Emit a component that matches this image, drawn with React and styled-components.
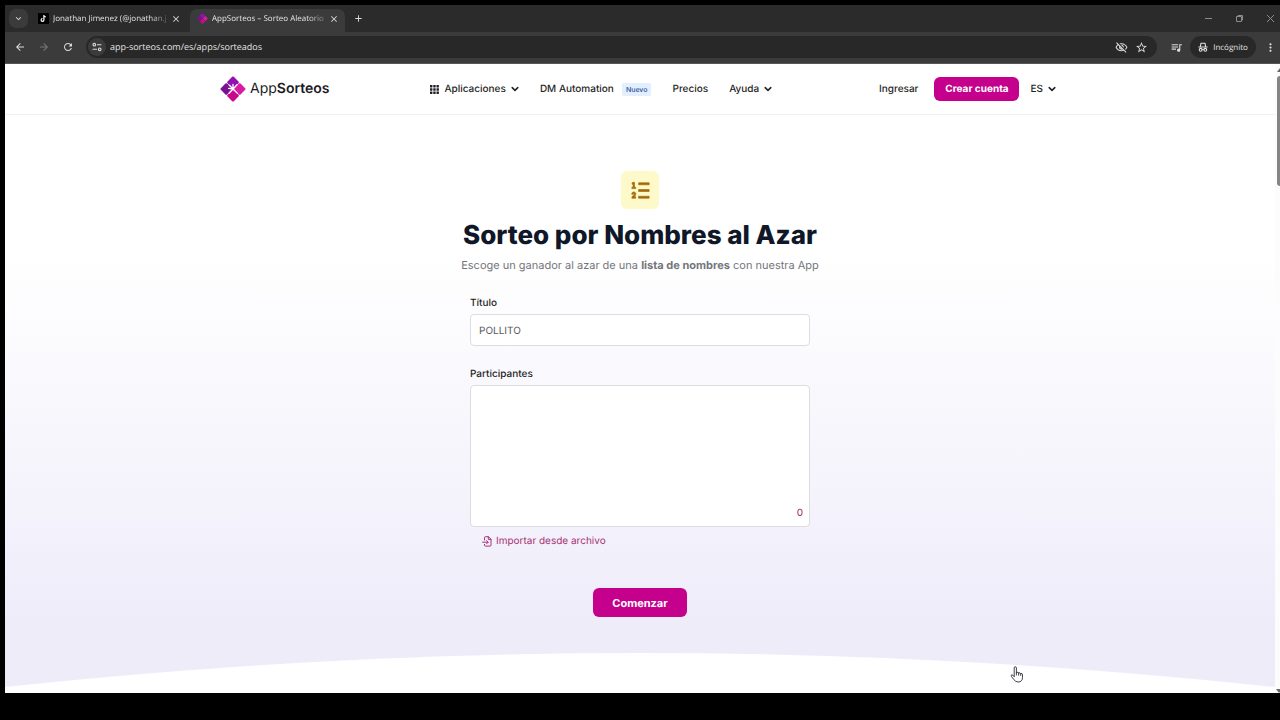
import React from "react";
import styled, { createGlobalStyle } from "styled-components";
import {
  MdAdd,
  MdArrowBack,
  MdArrowForward,
  MdClose,
  MdKeyboardArrowDown,
  MdMoreVert,
  MdOutlineVisibilityOff,
  MdQueueMusic,
  MdRefresh,
  MdStarBorder,
} from "react-icons/md";
import { RiListOrdered2 } from "react-icons/ri";

const GlobalStyle = createGlobalStyle`
  *, *::before, *::after { box-sizing: border-box; }
  body { margin: 0; background: #000; font-family: Inter, "Liberation Sans", sans-serif; text-rendering: geometricPrecision; }
  button, input, textarea { font-family: inherit; margin: 0; text-rendering: inherit; }
`;

const Screen = styled.div`
  position: relative;
  min-height: 100vh;
  padding: 5px 0 27px 5px;
  display: flex;
  flex-direction: column;
  background: #000;
`;

const Chrome = styled.header`
  font-family: "Open Sans", "Noto Sans", sans-serif;
  color: #e3e3e3;
  background: #3b3b3b;
`;

const TabStrip = styled.div`
  display: flex;
  align-items: center;
  gap: 3px;
  height: 27px;
  padding-left: 4px;
  background: #2b2b2b;
`;

const IconButton = styled.button`
  display: flex;
  align-items: center;
  justify-content: center;
  flex: none;
  width: ${(p) => p.$size || 20}px;
  height: ${(p) => p.$size || 20}px;
  padding: 0;
  border: 0;
  border-radius: ${(p) => p.$radius || 10}px;
  background: ${(p) => p.$bg || "transparent"};
  color: ${(p) => p.$color || "#dcdcdc"};
`;

const Tab = styled.div`
  display: flex;
  align-items: center;
  gap: 4px;
  width: ${(p) => p.$width}px;
  height: 23px;
  align-self: flex-end;
  padding: 0 5px 4px 7px;
  border-radius: 7px 7px 0 0;
  background: ${(p) => (p.$active ? "#3b3b3b" : "transparent")};
`;

const TabTitle = styled.span`
  flex: 1;
  min-width: 0;
  white-space: nowrap;
  font-size: 8px;
  line-height: 12px;
  color: #e3e3e3;
  mask-image: linear-gradient(to right, #000 85%, rgba(0, 0, 0, 0.3));
`;

const WindowControls = styled.div`
  display: flex;
  align-items: center;
  gap: 20px;
  margin-left: auto;
  padding-right: 4px;
`;

const Toolbar = styled.div`
  display: flex;
  align-items: center;
  gap: 4px;
  height: 32px;
  padding: 0 0 1px 5px;
  border-bottom: 1px solid #565656;
`;

const AddressBar = styled.div`
  display: flex;
  align-items: center;
  flex: 1;
  height: 22px;
  margin: 0 5px 0 4px;
  padding: 0 6px 0 2px;
  border-radius: 11px;
  background: #282828;
`;

const AddressInput = styled.input`
  flex: 1;
  min-width: 0;
  padding: 0 4px;
  border: 0;
  outline: 0;
  background: transparent;
  color: #e3e3e3;
  font-size: 9px;
  line-height: 14px;
`;

const IncognitoPill = styled.button`
  display: flex;
  align-items: center;
  justify-content: center;
  gap: 5px;
  width: 66px;
  height: 22px;
  padding: 0;
  border: 0;
  border-radius: 11px;
  background: #282828;
  color: #e3e3e3;
  font-size: 8px;
  font-weight: 500;
`;

const Viewport = styled.div`
  display: flex;
  flex: 1;
  background: #fff;
`;

const Page = styled.div`
  flex: 1;
  min-width: 0;
  display: flex;
  flex-direction: column;
`;

const ScrollTrack = styled.div`
  flex: none;
  width: 5px;
  padding-left: 1px;
  overflow: hidden;
  display: flex;
  flex-direction: column;
  justify-content: space-between;
  background: #fcfcfc;
`;

const ScrollTop = styled.div`
  padding: 4px 0 0 1px;
  svg { display: block; margin-bottom: 4px; }
`;

const ScrollThumb = styled.div`
  height: 110px;
  border-radius: 3px 0 0 3px;
  background: #858585;
`;

const Navbar = styled.div`
  height: 51px;
  padding: 0 16px;
  border-bottom: 1px solid #f0f0f2;
`;

const NavInner = styled.div`
  display: flex;
  align-items: center;
  justify-content: space-between;
  max-width: 840px;
  height: 100%;
  margin: 0 auto;
  padding-right: 4px;
`;

const Brand = styled.a`
  display: flex;
  align-items: center;
  gap: 4px;
  color: #1b1b1f;
  font-size: 14px;
  line-height: 20px;
  text-decoration: none;
  b { font-weight: 600; }
`;

const NavGroup = styled.nav`
  display: flex;
  align-items: center;
  gap: ${(p) => p.$gap}px;
  padding-right: ${(p) => p.$end || 0}px;
`;

const NavLink = styled.a`
  display: flex;
  align-items: center;
  gap: ${(p) => p.$gap || 5}px;
  color: #1f1f24;
  font-size: 10px;
  font-weight: 500;
  line-height: 16px;
  text-decoration: none;
`;

const Badge = styled.span`
  padding: 0 4px;
  border-radius: 2px;
  background: #e1effe;
  color: #2b4d9c;
  font-size: 7px;
  line-height: 13px;
`;

const PrimaryButton = styled.button`
  height: ${(p) => p.$height}px;
  width: ${(p) => p.$width}px;
  padding: 0;
  border: 0;
  border-radius: 6px;
  background: #c5008d;
  color: #fff;
  font-size: ${(p) => p.$size}px;
  font-weight: 700;
  line-height: 16px;
`;

const Hero = styled.main`
  flex: 1;
  display: flex;
  flex-direction: column;
  align-items: center;
  padding-top: 56px;
  background: linear-gradient(to bottom, #fff 24%, #f7f6fc 55%, #efecfa 88%);
`;

const IconTile = styled.div`
  display: flex;
  align-items: center;
  justify-content: center;
  width: 38px;
  height: 38px;
  border-radius: 6px;
  background: #fef9c8;
  color: #a16b0c;
  svg { stroke: currentColor; stroke-width: 0.7; }
`;

const Title = styled.h1`
  margin: 8px 0 1px;
  color: #0f1729;
  font-size: 26px;
  font-weight: 800;
  line-height: 38px;
`;

const Subtitle = styled.p`
  margin: 0 0 21px;
  color: #74757c;
  font-size: 11px;
  line-height: 18px;
  b { font-weight: 700; }
`;

const Form = styled.form`
  display: flex;
  flex-direction: column;
  align-items: center;
  width: 100%;
  max-width: 340px;
`;

const Field = styled.div`
  display: flex;
  flex-direction: column;
  gap: 3px;
  width: 100%;
  margin-bottom: ${(p) => p.$space}px;
`;

const Label = styled.label`
  color: #1f1f24;
  font-size: 10px;
  font-weight: 500;
  line-height: 16px;
`;

const TextInput = styled.input`
  width: 100%;
  height: 32px;
  padding: 1px 8px 0;
  border: 1px solid #dcdce2;
  border-radius: 4px;
  outline: 0;
  background: #fff;
  color: #5a5a60;
  font-size: 10px;
`;

const AreaWrap = styled.div`
  position: relative;
`;

const TextArea = styled.textarea`
  display: block;
  width: 100%;
  height: 142px;
  padding: 8px;
  border: 1px solid #dcdce2;
  border-radius: 4px;
  outline: 0;
  resize: none;
  background: #fff;
  font-size: 10px;
`;

const Counter = styled.span`
  position: absolute;
  right: 7px;
  bottom: 6px;
  color: #9b1c5c;
  font-size: 10px;
  line-height: 16px;
`;

const ImportLink = styled.button`
  display: flex;
  align-items: center;
  align-self: flex-start;
  gap: 4px;
  margin: 0 0 39px 12px;
  padding: 0;
  border: 0;
  background: transparent;
  color: #a83275;
  font-size: 10px;
  font-weight: 400;
  line-height: 16px;
`;

const Curve = styled.svg`
  display: block;
  width: 100%;
  height: 40px;
  margin-top: auto;
`;

const Cursor = styled.svg`
  position: absolute;
  left: 1010px;
  top: 666px;
`;

const Chevron = () => (
  <svg width="8" height="8" viewBox="0 0 8 8" fill="none" stroke="currentColor" strokeWidth="1.5" strokeLinecap="round" strokeLinejoin="round" aria-hidden="true">
    <path d="M1.2 2.6 4 5.4 6.8 2.6" />
  </svg>
);

const BrandMark = ({ size, spark }) => (
  <svg width={size} height={size} viewBox="0 0 26 26" aria-hidden="true">
    <g transform="rotate(45 13 13)">
      <rect x="3.800" y="3.800" width="8.900" height="8.900" rx="1.200" fill="#9410b0" />
      <rect x="13.300" y="3.800" width="8.900" height="8.900" rx="1.200" fill="#d81ba4" />
      <rect x="3.800" y="13.300" width="8.900" height="8.900" rx="1.200" fill="#7a1190" />
      <rect x="13.300" y="13.300" width="8.900" height="8.900" rx="1.200" fill="#c9098c" />
    </g>
    {spark && (
      <path d="M13 13V8.400M13 13 8.600 12.400M13 13l-4 4.200M13 13l4-4.200M13 13 9.400 9.200M13 13l4.400 4.400" stroke="#fff" strokeWidth="1.300" strokeLinecap="round" />
    )}
  </svg>
);

const TikTokMark = () => (
  <svg width="11" height="11" viewBox="0 0 11 11" aria-hidden="true">
    <rect width="11" height="11" rx="1" fill="#000" />
    <path d="M5.900 2v4.900a1.400 1.400 0 1 1-1.400-1.400M5.900 2c.1 1.200.9 1.900 2 2" fill="none" stroke="#fff" strokeWidth="1.200" />
  </svg>
);

const TuneIcon = () => (
  <svg width="10" height="10" viewBox="0 0 10 10" fill="none" stroke="currentColor" strokeWidth="1.100" strokeLinecap="round" aria-hidden="true">
    <circle cx="2.300" cy="2.700" r="1.300" />
    <path d="M5.400 2.700H9M1 7.300h3.600" />
    <circle cx="7.700" cy="7.300" r="1.300" />
  </svg>
);

const IncognitoIcon = () => (
  <svg width="10" height="10" viewBox="0 0 10 10" fill="none" stroke="currentColor" strokeWidth="1.100" strokeLinejoin="round" aria-hidden="true">
    <path d="M2.400 4.500 3 1.200h4l.6 3.300M.4 5h9.200M4 7.600q1-.6 2 0" />
    <circle cx="2.700" cy="7.800" r="1.400" />
    <circle cx="7.300" cy="7.800" r="1.400" />
  </svg>
);

const GridIcon = () => (
  <svg width="9" height="9" viewBox="0 0 10 10" fill="currentColor" aria-hidden="true">
    {[0, 3.6, 7.2].map((y) => [0, 3.6, 7.2].map((x) => <rect key={`${x}-${y}`} x={x} y={y} width="2.700" height="2.700" rx=".4" />))}
  </svg>
);

const FileImportIcon = () => (
  <svg width="10" height="11" viewBox="0 0 10 11" fill="none" stroke="currentColor" strokeWidth="1" strokeLinecap="round" strokeLinejoin="round" aria-hidden="true">
    <path d="M2.500 4V1.600q0-.9.900-.9H6.500L9 3.200v6q0 .9-.9.900H3.400q-.9 0-.9-.9V8.400M6.300.8v2.600h2.600M.6 6.200h5.400M4.600 4.600l1.600 1.600-1.600 1.600" />
  </svg>
);

const MinimizeIcon = () => (
  <svg width="9" height="9" viewBox="0 0 9 9" stroke="currentColor" aria-hidden="true"><path d="M1 4.500h7" /></svg>
);

const RestoreIcon = () => (
  <svg width="9" height="9" viewBox="0 0 9 9" fill="none" stroke="currentColor" aria-hidden="true">
    <path d="M1.500 2.500h5v5h-5zM3 2.500V1.500h4.500V6H6.500" />
  </svg>
);

const CloseIcon = () => (
  <svg width="9" height="9" viewBox="0 0 9 9" stroke="currentColor" aria-hidden="true"><path d="m1 1 7 7M8 1 1 8" /></svg>
);

const ScrollArrow = ({ down }) => (
  <svg width="6" height="4" viewBox="0 0 6 4" fill="#666" aria-hidden="true">
    <path d={down ? "M0 0h6L3 4z" : "M3 0l3 4H0z"} />
  </svg>
);

export default function App() {
  return (
    <>
      <GlobalStyle />
      <Screen>
        <Chrome>
          <TabStrip>
            <IconButton $size={19} $radius={7} $bg="#3b3b3b" aria-label="Buscar pestañas"><MdKeyboardArrowDown size={11} /></IconButton>
            <Tab $width={156}>
              <TikTokMark />
              <TabTitle>Jonathan Jimenez (@jonathan.j</TabTitle>
              <IconButton $size={12} aria-label="Cerrar pestaña"><MdClose size={10} /></IconButton>
            </Tab>
            <Tab $width={155} $active>
              <BrandMark size={11} />
              <TabTitle>AppSorteos – Sorteo Aleatorio</TabTitle>
              <IconButton $size={12} aria-label="Cerrar pestaña"><MdClose size={10} /></IconButton>
            </Tab>
            <IconButton aria-label="Nueva pestaña"><MdAdd size={11} /></IconButton>
            <WindowControls>
              <IconButton $size={11} $color="#8c8c8c" aria-label="Minimizar"><MinimizeIcon /></IconButton>
              <IconButton $size={11} $color="#8c8c8c" aria-label="Restaurar"><RestoreIcon /></IconButton>
              <IconButton $size={11} $color="#8c8c8c" aria-label="Cerrar"><CloseIcon /></IconButton>
            </WindowControls>
          </TabStrip>
          <Toolbar>
            <IconButton aria-label="Atrás"><MdArrowBack size={12} /></IconButton>
            <IconButton $color="#777" aria-label="Adelante"><MdArrowForward size={12} /></IconButton>
            <IconButton aria-label="Recargar"><MdRefresh size={12} /></IconButton>
            <AddressBar>
              <IconButton $size={18} $bg="#3b3b3b" aria-label="Información del sitio"><TuneIcon /></IconButton>
              <AddressInput aria-label="Dirección" defaultValue="app-sorteos.com/es/apps/sorteados" />
              <IconButton aria-label="Cookies bloqueadas"><MdOutlineVisibilityOff size={13} /></IconButton>
              <IconButton aria-label="Añadir a favoritos"><MdStarBorder size={13} /></IconButton>
            </AddressBar>
            <IconButton aria-label="Multimedia"><MdQueueMusic size={13} /></IconButton>
            <IncognitoPill><IncognitoIcon />Incógnito</IncognitoPill>
            <IconButton aria-label="Menú"><MdMoreVert size={13} /></IconButton>
          </Toolbar>
        </Chrome>
        <Viewport>
          <Page>
            <Navbar>
              <NavInner>
                <Brand href="#inicio">
                  <BrandMark size={26} spark />
                  <span>App<b>Sorteos</b></span>
                </Brand>
                <NavGroup $gap={21} $end={6}>
                  <NavLink href="#aplicaciones"><GridIcon />Aplicaciones<Chevron /></NavLink>
                  <NavLink href="#dm" $gap={8}>DM Automation<Badge>Nuevo</Badge></NavLink>
                  <NavLink href="#precios">Precios</NavLink>
                  <NavLink href="#ayuda">Ayuda<Chevron /></NavLink>
                </NavGroup>
                <NavGroup $gap={16}>
                  <NavLink href="#ingresar">Ingresar</NavLink>
                  <NavGroup as="div" $gap={11}>
                    <PrimaryButton $size={10} $width={85} $height={24}>Crear cuenta</PrimaryButton>
                    <NavLink href="#idioma">ES<Chevron /></NavLink>
                  </NavGroup>
                </NavGroup>
              </NavInner>
            </Navbar>
            <Hero>
              <IconTile><RiListOrdered2 size={23} /></IconTile>
              <Title>Sorteo por Nombres al Azar</Title>
              <Subtitle>Escoge un ganador al azar de una <b>lista de nombres</b> con nuestra App</Subtitle>
              <Form onSubmit={(e) => e.preventDefault()}>
                <Field $space={20}>
                  <Label htmlFor="titulo">Título</Label>
                  <TextInput id="titulo" defaultValue="POLLITO" />
                </Field>
                <Field $space={6}>
                  <Label htmlFor="participantes">Participantes</Label>
                  <AreaWrap>
                    <TextArea id="participantes" />
                    <Counter>0</Counter>
                  </AreaWrap>
                </Field>
                <ImportLink type="button"><FileImportIcon />Importar desde archivo</ImportLink>
                <PrimaryButton type="submit" $size={11} $width={94} $height={29}>Comenzar</PrimaryButton>
              </Form>
              <Curve viewBox="0 0 1270 40" preserveAspectRatio="none" aria-hidden="true">
                <path d="M0 34Q635-34 1270 34V40H0z" fill="#fff" />
              </Curve>
            </Hero>
          </Page>
          <ScrollTrack>
            <ScrollTop>
              <ScrollArrow />
              <ScrollThumb />
            </ScrollTop>
            <ScrollArrow down />
          </ScrollTrack>
        </Viewport>
        <Cursor width="14" height="17" viewBox="0 0 14 17" aria-hidden="true">
          <path d="M4.200 10.500V2q0-1.200 1.100-1.200T6.400 2v4.500q1.900-.8 2.200.5 1.800-.7 2.100.6 1.800-.5 1.800 1.100v2.600q0 4.700-4.500 4.700-2.700 0-4.200-2.600L1.300 10.300q-.5-1.200.5-1.500.9-.2 2.400 1.700M6.400 6.500v2.500M8.600 7v2.200M10.700 7.600v1.900" fill="#fff" stroke="#2b2b33" strokeWidth=".9" strokeLinejoin="round" strokeLinecap="round" />
        </Cursor>
      </Screen>
    </>
  );
}
